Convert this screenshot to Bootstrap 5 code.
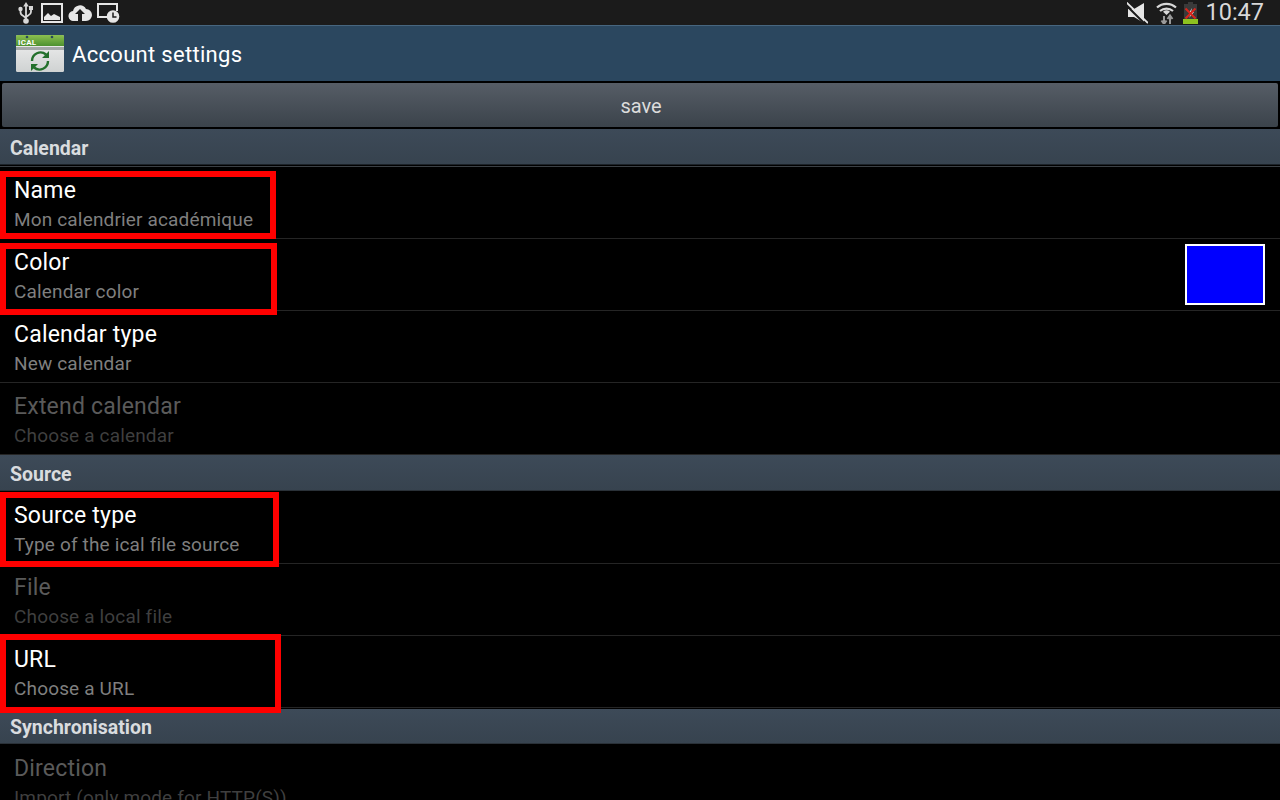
<!DOCTYPE html>
<html lang="en">
<head>
    <meta charset="UTF-8">
    <meta name="viewport" content="width=device-width, initial-scale=1.0">
    <title>Account settings</title>
    <link href="https://cdn.jsdelivr.net/npm/bootstrap@5.3.0/dist/css/bootstrap.min.css" rel="stylesheet">
    <style>
        html, body {
            height: 800px;
            overflow: hidden;
            background: #000;
            font-family: Roboto, "Liberation Sans", sans-serif;
        }
        .status-bar {
            height: 25px;
            background: #1b1b1b;
            padding: 0 16px 0 18px;
        }
        .left-icons { gap: 5px; }
        .usb-icon { margin-right: 2px; }
        .clock {
            margin-left: 7px;
            font-size: 23.5px;
            line-height: 25px;
            color: #d8d8d8;
        }
        .mute-icon { margin-right: 8px; }
        .wifi-icon { margin-right: 6px; }
        .action-bar {
            height: 56px;
            background: #2b475f;
            border-top: 1px solid #47667f;
            padding-left: 16px;
            color: #fff;
            font-size: 22px;
            letter-spacing: .3px;
        }
        .action-title { margin-top: 2px; }
        .save-wrap {
            height: 48px;
            padding: 2px 2px;
            background: #000;
        }
        .save-btn {
            width: 100%;
            height: 44px;
            padding: 2px 0 0 2px;
            border: 0;
            border-radius: 2px;
            background: linear-gradient(#565d66, #3b434b);
            color: #dcdcdc;
            font-size: 20px;
            line-height: 1;
        }
        .save-btn:hover { background: linear-gradient(#565d66, #3b434b); color: #dcdcdc; }
        .group-head {
            height: 36px;
            padding: 1px 0 0 10px;
            margin-bottom: 1px;
            background: linear-gradient(#3d4a58, #37434f);
            border-bottom: 1px solid #2a3138;
            color: #d9dcdf;
            font-size: 19.5px;
            font-weight: 700;
            line-height: 37px;
        }
        .group-first { margin-bottom: 0; border-bottom-color: #1c2228; }
        .group-rule { height: 2px; border-bottom: 1px solid #3a3f44; }
        .group-last { height: 35px; padding-top: 0; margin-top: 1px; }
        .pref-row {
            height: 72px;
            padding: 10px 14px 0;
            background: #000;
            border-bottom: 1px solid #252525;
        }
        .pref-row:last-child { border-bottom: 0; }
        .pref-title { font-size: 23px; letter-spacing: .2px; line-height: 28px; color: #fff; }
        .pref-sub { font-size: 19px; letter-spacing: .16px; line-height: 24px; margin-top: 3px; color: #7f7f7f; }
        .pref-off .pref-title { color: #5a5a5a; }
        .pref-off .pref-sub { color: #3f3f3f; }
        .swatch {
            width: 80px;
            height: 61px;
            margin: -5px 1px 0 0;
            background: #0000ff;
            border: 2px solid #fff;
        }
        .red-box {
            position: absolute;
            left: 0;
            border: 6px solid #ff0000;
            pointer-events: none;
        }
        .page-wrap { position: relative; height: 800px; overflow: hidden; }
    </style>
</head>
<body>
<div class="page-wrap">
    <!-- status bar -->
    <div class="status-bar d-flex align-items-center justify-content-between">
        <div class="left-icons d-flex align-items-center">
            <svg class="usb-icon" width="16" height="22" viewBox="0 0 16 22">
                <path d="M8 0l2.800 4.500H5.200z" fill="#d8d8d8"/>
                <path d="M8 4v15M2.500 8v2q0 2.500 2.500 3.700l3 2.300M13 7v3q0 2-2.500 3.200L8 15" fill="none" stroke="#d8d8d8" stroke-width="1.800"/>
                <circle cx="2.500" cy="7" r="2.200" fill="#d8d8d8"/>
                <rect x="11" y="4" width="4" height="4" fill="#d8d8d8"/>
                <circle cx="8" cy="19" r="2.800" fill="#d8d8d8"/>
            </svg>
            <svg width="22" height="20" viewBox="0 0 22 20">
                <rect x="1" y="1" width="20" height="18" fill="#1b1b1b" stroke="#e6e6e6" stroke-width="2"/>
                <path d="M3 17v-3l4-4 3 3 3-2 2 1 4 2v3z" fill="#e6e6e6"/>
            </svg>
            <svg width="24" height="17" viewBox="0 0 24 17">
                <path d="M6 17a5 5 0 0 1-1-10A7 7 0 0 1 18 5a6 6 0 0 1 0 12z" fill="#e6e6e6"/>
                <path d="M12 5l5 5h-3v7h-4v-7H7z" fill="#1b1b1b"/>
            </svg>
            <svg width="23" height="20" viewBox="0 0 23 20">
                <path d="M10 14H1V1h19v7" fill="none" stroke="#e6e6e6" stroke-width="2"/>
                <circle cx="16" cy="13.500" r="6.300" fill="#e6e6e6"/>
                <path d="M16 9.500v4.500h3.500" fill="none" stroke="#1b1b1b" stroke-width="1.500"/>
            </svg>
        </div>
        <div class="d-flex align-items-center">
            <svg class="mute-icon" width="21" height="22" viewBox="0 0 21 22">
                <path d="M1 7h6l10-6v20L7 15H1z" fill="#e6e6e6"/>
                <path d="M-1 3l20 20" stroke="#1b1b1b" stroke-width="2"/>
                <path d="M-1 0l22 21" stroke="#e6e6e6" stroke-width="1.800"/>
            </svg>
            <svg class="wifi-icon" width="21" height="23" viewBox="0 0 21 23" fill="none">
                <path d="M1 6.500a14 14 0 0 1 19 0M4 10a10 10 0 0 1 13 0" stroke="#d8d8d8" stroke-width="2.200"/>
                <path d="M10.500 14l-3.500-3.200a5.500 5.500 0 0 1 7 0z" fill="#d8d8d8"/>
                <path d="M8 15v8M5.500 19.500L8 23l2.500-3.500M14 23v-8M11.500 18L14 14.500l2.500 3.500" stroke="#9a9a9a" stroke-width="2"/>
            </svg>
            <svg width="15" height="22" viewBox="0 0 15 22">
                <path d="M5 0h5v2h4v15H1V2h4z" fill="#3a3a3a"/>
                <rect x="0" y="17" width="15" height="5" fill="#8ec21f"/>
                <path d="M9 6l-3 5h2.500L6 16l5-6H8z" fill="#e8e8e8"/>
                <path d="M2.500 6.500l10 10M12.500 6.500l-10 10" stroke="#d8261c" stroke-width="2"/>
            </svg>
            <span class="clock">10:47</span>
        </div>
    </div>

    <!-- action bar -->
    <div class="action-bar d-flex align-items-center">
        <svg width="48" height="38" viewBox="0 0 48 38">
            <defs>
                <linearGradient id="calTop" x1="0" y1="0" x2="0" y2="1">
                    <stop offset="0" stop-color="#8cc050"/>
                    <stop offset="1" stop-color="#4d9130"/>
                </linearGradient>
                <linearGradient id="calBody" x1="0" y1="0" x2="0" y2="1">
                    <stop offset="0" stop-color="#f2f2f2"/>
                    <stop offset="1" stop-color="#cfd2d2"/>
                </linearGradient>
            </defs>
            <rect x="0" y="0" width="48" height="37" rx="1.500" fill="url(#calBody)"/>
            <path d="M0 1.500A1.500 1.500 0 0 1 1.500 0h45A1.500 1.500 0 0 1 48 1.500V11H0z" fill="url(#calTop)"/>
            <rect x="0" y="12" width="48" height="3" fill="#a4a8a8"/>
            <circle cx="11" cy="2" r="1.300" fill="#2a4a5a"/>
            <circle cx="36" cy="2" r="1.300" fill="#2a4a5a"/>
            <text x="2" y="10" font-family="Roboto, sans-serif" font-size="8" font-weight="700" fill="#fff">ICAL</text>
            <path d="M16 26a8.500 8.500 0 0 1 14-6.500M32 26a8.500 8.500 0 0 1-14 6.500" fill="none" stroke="#23702c" stroke-width="2.400"/>
            <path d="M33 16v7h-7zM15 36v-7h7z" fill="#23702c"/>
        </svg>
        <span class="action-title ms-2">Account settings</span>
    </div>

    <div class="save-wrap">
        <button type="button" class="btn save-btn">save</button>
    </div>

    <div class="group-head group-first">Calendar</div>
    <div class="group-rule"></div>
    <div class="pref-row">
        <div class="pref-title">Name</div>
        <div class="pref-sub">Mon calendrier académique</div>
    </div>
    <div class="pref-row d-flex justify-content-between">
        <div>
            <div class="pref-title">Color</div>
            <div class="pref-sub">Calendar color</div>
        </div>
        <div class="swatch"></div>
    </div>
    <div class="pref-row">
        <div class="pref-title">Calendar type</div>
        <div class="pref-sub">New calendar</div>
    </div>
    <div class="pref-row pref-off">
        <div class="pref-title">Extend calendar</div>
        <div class="pref-sub">Choose a calendar</div>
    </div>

    <div class="group-head">Source</div>
    <div class="pref-row">
        <div class="pref-title">Source type</div>
        <div class="pref-sub">Type of the ical file source</div>
    </div>
    <div class="pref-row pref-off">
        <div class="pref-title">File</div>
        <div class="pref-sub">Choose a local file</div>
    </div>
    <div class="pref-row">
        <div class="pref-title">URL</div>
        <div class="pref-sub">Choose a URL</div>
    </div>

    <div class="group-head group-last">Synchronisation</div>
    <div class="pref-row pref-off">
        <div class="pref-title">Direction</div>
        <div class="pref-sub">Import (only mode for HTTP(S))</div>
    </div>

    <!-- red annotations drawn over the list -->
    <div class="red-box" style="top:171px;width:276px;height:68px"></div>
    <div class="red-box" style="top:243px;width:277px;height:72px"></div>
    <div class="red-box" style="top:492px;width:279px;height:75px"></div>
    <div class="red-box" style="top:634px;width:281px;height:79px"></div>
</div>
<script src="https://cdn.jsdelivr.net/npm/bootstrap@5.3.0/dist/js/bootstrap.bundle.min.js"></script>
</body>
</html>
